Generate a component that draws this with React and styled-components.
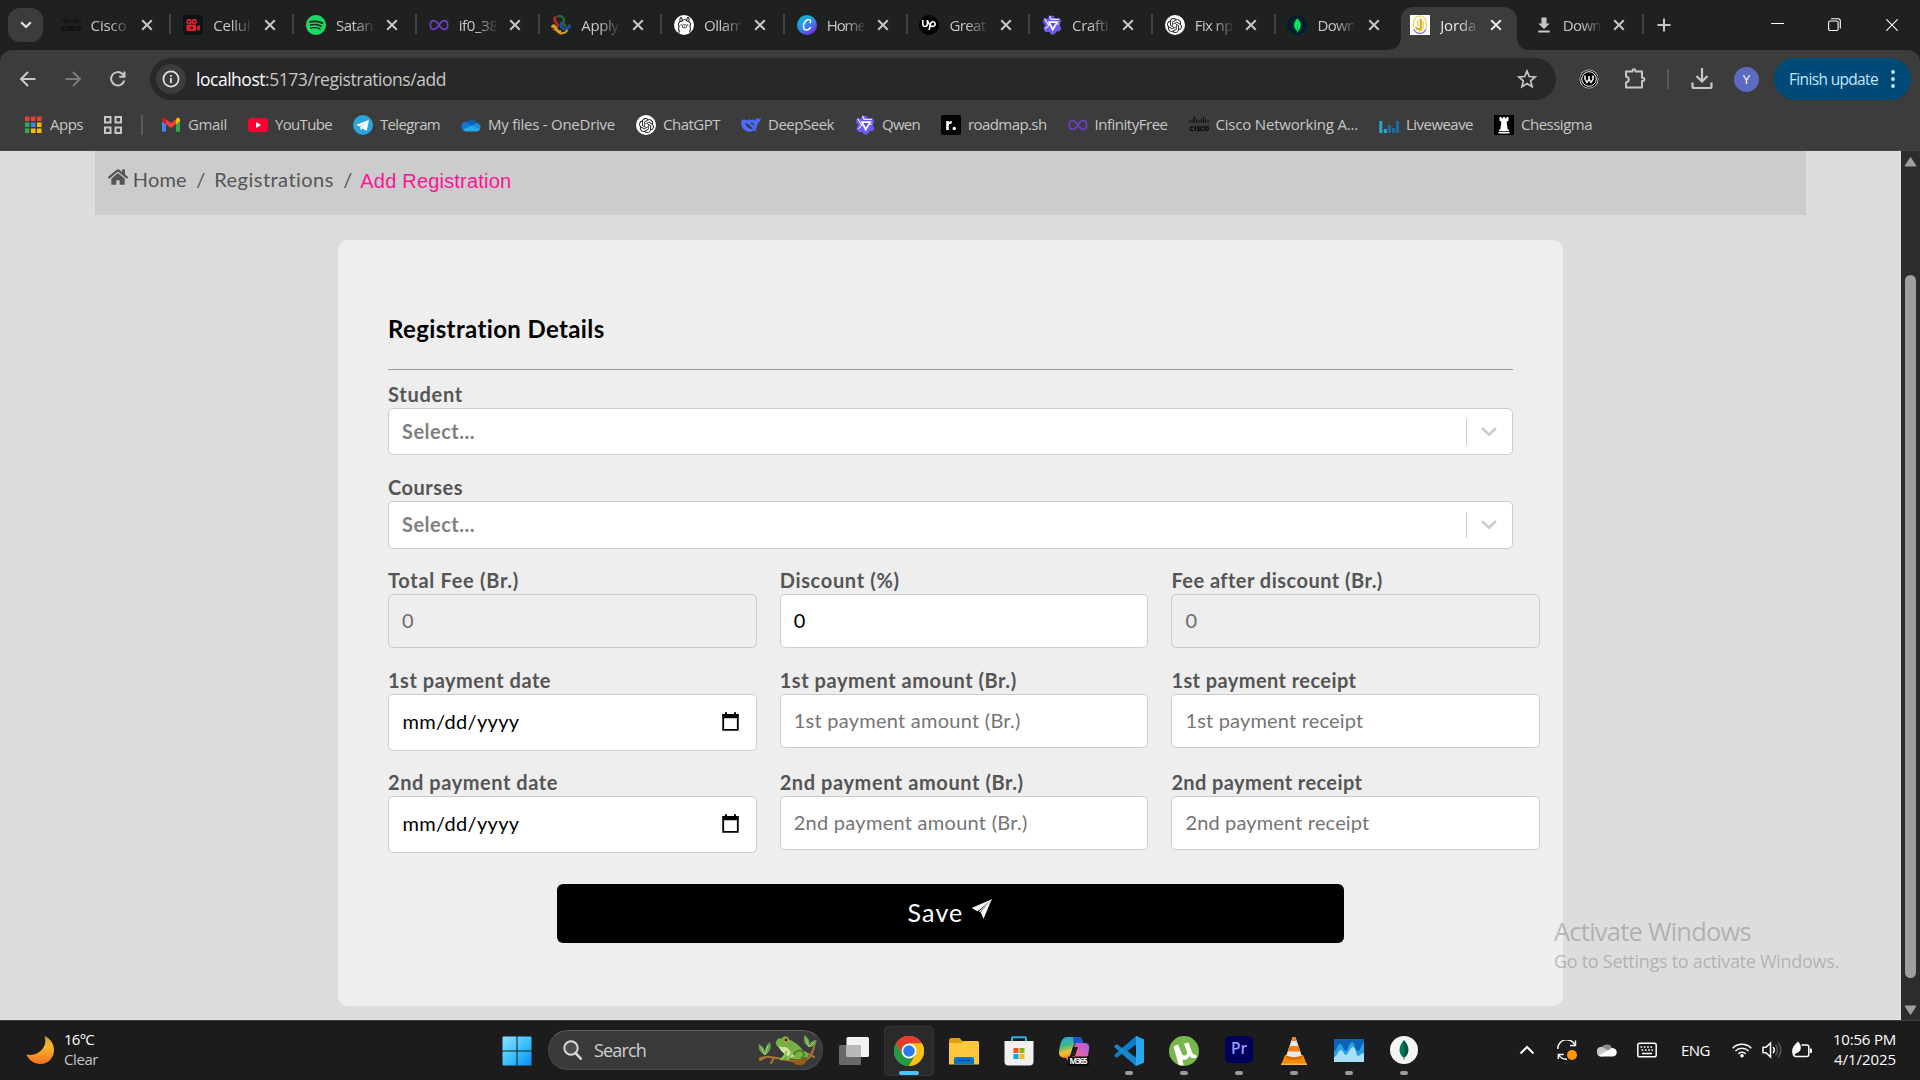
import React, { useLayoutEffect, useRef, useState } from "react";
import styled, { createGlobalStyle, css } from "styled-components";
import { FaHome } from "react-icons/fa";
import { SiSpotify, SiOllama, SiUpwork, SiOpenai, SiMongodb } from "react-icons/si";

const UI = `"Open Sans", "Noto Sans", sans-serif`;
const PAGE = `Lato, "Open Sans", sans-serif`;

const Global = createGlobalStyle`
  *, *::before, *::after { box-sizing: border-box; }
  html, body { margin: 0; padding: 0; overflow: hidden; background: #1c1c1c; }
  svg { display: block; flex: none; }
`;

/* ---------- text that keeps a given run length ---------- */

const Run = styled.span`
  display: inline-block;
  white-space: pre;
  flex: none;
`;

function Fit({ w, children }) {
  const ref = useRef(null);
  const [spacing, setSpacing] = useState(0);
  useLayoutEffect(() => {
    const natural = ref.current.getBoundingClientRect().width;
    setSpacing((w - natural) / String(children).length);
  }, [w, children]);
  return (
    <Run ref={ref} style={{ letterSpacing: `${spacing}px` }}>
      {children}
    </Run>
  );
}

/* ---------- window ---------- */

const Screen = styled.div`
  width: 1920px;
  height: 1080px;
  display: flex;
  flex-direction: column;
  position: relative;
  overflow: hidden;
  font-family: ${UI};
  background: #1f2120;
`;

/* ---------- tab strip ---------- */

const TabStrip = styled.div`
  height: 50px;
  flex: none;
  display: flex;
  align-items: center;
  background: #1f2120;
`;

const TabSearch = styled.div`
  width: 35px;
  height: 34px;
  margin: 0 4.8px 0 8px;
  border-radius: 12px;
  background: #3c3c3c;
  display: flex;
  align-items: center;
  justify-content: center;
`;

const TabBox = styled.div`
  width: 122.7px;
  height: 50px;
  flex: none;
  display: flex;
  align-items: center;
  padding-left: 12.8px;
  position: relative;
  isolation: isolate;
  color: ${(p) => (p.$active ? "#e8e8e8" : "#c7c7c7")};
  ${(p) =>
    p.$sep &&
    css`
      &::after {
        content: "";
        position: absolute;
        right: -1px;
        top: 14px;
        width: 2px;
        height: 20px;
        background: #444;
      }
    `}
`;

const ActiveShape = styled.svg`
  position: absolute;
  left: -11px;
  top: 7px;
  z-index: -1;
`;

const TabTitle = styled.div`
  width: 37px;
  margin: 0 13.3px 0 10px;
  white-space: nowrap;
  font-size: 15px;
  line-height: 22px;
  -webkit-mask-image: linear-gradient(90deg, #000 50%, rgba(0, 0, 0, 0.15) 100%);
  mask-image: linear-gradient(90deg, #000 50%, rgba(0, 0, 0, 0.15) 100%);
`;

const NewTab = styled.div`
  margin-left: 14px;
  flex: 1;
`;

const WindowButtons = styled.div`
  display: flex;
  align-items: center;
  & > div {
    width: 57px;
    display: flex;
    justify-content: center;
  }
`;

const Slot = styled.div`
  width: ${(p) => p.$w || 20}px;
  height: ${(p) => p.$h || 20}px;
  flex: none;
  display: flex;
  align-items: center;
  justify-content: center;
  border-radius: ${(p) => p.$r || 0};
  background: ${(p) => p.$bg || "transparent"};
  color: ${(p) => p.$c || "inherit"};
  overflow: hidden;
`;

const Cross = ({ s = 12, sw = 2, c = "currentColor" }) => (
  <svg width={s} height={s} viewBox="0 0 12 12">
    <path d="M1.2 1.2 10.8 10.8M10.8 1.2 1.2 10.8" stroke={c} strokeWidth={sw} fill="none" />
  </svg>
);

/* ---------- favicons ---------- */

const CiscoIcon = () => (
  <svg width="20" height="20" viewBox="0 0 20 20" fill="none" stroke="#0e0e0e">
    <path
      d="M.7 5.500v2M3 4v3.500M5.300 1.500V8M7.600 4v3.500M10 5.500v2M12.300 4v3.500M14.600 1.500V8M16.900 4v3.500M19.300 5.500v2"
      strokeWidth="1.100"
    />
    <path
      d="M4.600 11.800H3.200a1.700 1.700 0 0 0 0 3.700h1.400M6.300 11v4.900M10.700 11.700H9.300c-1.200 0-1.200 1.800 0 1.900 1.400.1 1.400 2 0 2H7.900M14.700 11.800h-1.200a1.700 1.700 0 0 0 0 3.700h1.200"
      strokeWidth="1.400"
    />
    <circle cx="17.500" cy="13.600" r="1.800" strokeWidth="1.400" />
  </svg>
);
const CameraIcon = () => (
  <Slot $bg="#0c1218" $r="3px">
    <svg width="20" height="20" viewBox="0 0 20 20">
      <g fill="#e0222b">
        <circle cx="6" cy="6.5" r="2.7" />
        <circle cx="11.2" cy="6.5" r="2.7" />
        <rect x="3.5" y="9.6" width="9.5" height="6.4" rx="1" />
        <path d="M13.6 12 16.8 9.8v6.2l-3.2-2z" />
      </g>
      <g fill="#0c1218">
        <circle cx="6" cy="6.5" r="1" />
        <circle cx="11.2" cy="6.5" r="1" />
        <rect x="7.5" y="11.8" width="2.5" height="2" />
      </g>
    </svg>
  </Slot>
);
const SpotifyIcon = () => (
  <Slot $c="#1ed760">
    <SiSpotify size={20} />
  </Slot>
);
const InfinityIcon = () => (
  <svg width="20" height="20" viewBox="0 0 20 20">
    <path
      d="M10 10C8 7 6.800 5.600 4.900 5.600 2.700 5.600 1.300 7.500 1.300 10s1.400 4.400 3.600 4.400C6.800 14.400 8 13 10 10s3.200-4.400 5.100-4.400c2.200 0 3.600 1.900 3.600 4.400s-1.400 4.400-3.600 4.400C13.200 14.400 12 13 10 10z"
      fill="none"
      stroke="#6f3dc4"
      strokeWidth="1.800"
    />
  </svg>
);
const ApplyIcon = () => (
  <svg width="20" height="20" viewBox="0 0 20 20" fill="none" strokeLinecap="round">
    <path d="M7 1.500C10 0 14 3 12.500 6.500 11.500 9 13 10 14.500 11" stroke="#1d6b3a" strokeWidth="2.600" />
    <path d="M4 2.500C1.500 6 7.500 7.500 6.500 11 5.800 13.200 4 14 3 14.500" stroke="#b3261e" strokeWidth="3" />
    <path d="M1.500 11.500C3 10 3.500 11 4.500 13s3 4.500 4.500 3.500" stroke="#dba21b" strokeWidth="2.800" />
    <path d="M10.500 8c-2 4 1.500 6 3.500 6s4-1 4.500-3" stroke="#234d9a" strokeWidth="3" />
    <path d="M9 18.500c3 0 6-1 7-3" stroke="#dba21b" strokeWidth="1.800" />
  </svg>
);
const OllamaIcon = () => (
  <Slot $bg="#fff" $r="50%" $c="#111">
    <SiOllama size={17} />
  </Slot>
);
const CanvaIcon = () => (
  <svg width="20" height="20" viewBox="0 0 20 20">
    <defs>
      <linearGradient id="cv" x1="0" y1="0" x2=".7" y2="1">
        <stop offset="0" stopColor="#00c4cc" />
        <stop offset=".55" stopColor="#2d8bea" />
        <stop offset="1" stopColor="#7d2ae8" />
      </linearGradient>
    </defs>
    <circle cx="10" cy="10" r="10" fill="url(#cv)" />
    <path d="M13.200 7.600c.9-1.200.5-3-1.300-3-2.900 0-5.400 3.400-5.400 6.600 0 2.200 1.200 3.900 3.100 3.900 1.600 0 2.900-1 3.900-2.600" fill="none" stroke="#fff" strokeWidth="1.500" strokeLinecap="round" />
  </svg>
);
const UpworkIcon = () => (
  <Slot $bg="#000" $r="50%" $c="#fff">
    <SiUpwork size={14} />
  </Slot>
);
const QwenIcon = () => (
  <svg width="20" height="20" viewBox="0 0 20 20">
    <path d="M7.500.8h4l1.300 2.500h5l1.600 3-2 3.200 2 3.700-1.800 3h-2.800l-2.600 3.200H9L7.600 17H3.200L1.300 13.500l1.800-3L.6 6.300l1.900-2.800h3.400z" fill="#6a5cf0" />
    <path d="M5.600 6.300h11l-2.800 4.500-3.400 5.200z" fill="#fff" />
    <path d="M8.400 8h5.200l-2.800 4.600z" fill="#5a48e6" />
    <path d="M7.500.8 9 4.300H17M2.500 3.500l4.300 7-3.600 3.400M10.400 16l4-7h3" fill="none" stroke="#e6e2ff" strokeWidth="1.200" />
  </svg>
);
const GptIcon = () => (
  <Slot $bg="#fff" $r="50%" $c="#222">
    <SiOpenai size={15} />
  </Slot>
);
const MongoIcon = () => (
  <Slot $bg="#001e2b" $r="50%" $c="#00ed64">
    <SiMongodb size={15} />
  </Slot>
);
const JordanIcon = () => (
  <Slot $bg="#fff">
    <svg width="20" height="20" viewBox="0 0 20 20" fill="none">
      <path d="M4 13C2 7 5 1 10 1s7.500 6 6 12" stroke="#f1d24a" strokeWidth="1.200" />
      <path d="M4 14c2 6 9.500 6 12 0" stroke="#8c7cc0" strokeWidth="1.300" />
      <path d="M10.800 3.500v8.500c0 3-4.600 3-4.600 0" stroke="#d6ac1a" strokeWidth="2" />
      <path d="M8 5v6M13 6v6c0 3-2 4-5 4" stroke="#e2bf3a" strokeWidth="1.100" />
    </svg>
  </Slot>
);
const DownloadTabIcon = () => (
  <svg width="20" height="20" viewBox="0 0 20 20">
    <path d="M8.500 2.500h5v6h3.200L11 14 5.300 8.500h3.200zM5.300 15.500h11.400v2H5.300z" fill="#c7c7c7" />
  </svg>
);

const TABS = [
  [CiscoIcon, "Cisco", 36],
  [CameraIcon, "Cellul", 37],
  [SpotifyIcon, "Satan", 37],
  [InfinityIcon, "if0_38", 39],
  [ApplyIcon, "Apply", 37],
  [OllamaIcon, "Ollam", 39],
  [CanvaIcon, "Home", 38],
  [UpworkIcon, "Great", 36],
  [QwenIcon, "Crafti", 36],
  [GptIcon, "Fix np", 38],
  [MongoIcon, "Down", 38],
  [JordanIcon, "Jorda", 36],
  [DownloadTabIcon, "Down", 38],
];

/* ---------- toolbar ---------- */

const Chrome = styled.div`
  height: 101px;
  flex: none;
  background: #3c3c3c;
  border-radius: 12px 12px 0 0;
  border-bottom: 1px solid #4a4646;
`;

const ToolRow = styled.div`
  height: 58px;
  display: flex;
  align-items: center;
  color: #c7c7c7;
`;

const NavButtons = styled.div`
  width: 150px;
  display: flex;
  align-items: center;
  padding-left: 18px;
  gap: 25px;
`;

const Omnibox = styled.div`
  width: 1406px;
  height: 42px;
  border-radius: 21px;
  background: #282828;
  display: flex;
  align-items: center;
  padding: 0 19px 0 6px;
  font-size: 17.5px;
  color: #c7c7c7;
`;

const Host = styled.span`
  color: #fff;
  margin-left: 10px;
`;

const Spacer = styled.div`
  flex: 1;
`;

const ToolIcons = styled.div`
  display: flex;
  align-items: center;
  flex: 1;
  padding-left: 23px;
`;

const Puzzle = styled.svg`
  margin-left: 24px;
`;

const Divider = styled.div`
  width: 2px;
  height: 20px;
  background: #5b5b5b;
  margin: ${(p) => p.$m || "0"};
`;

const Avatar = styled.div`
  width: 25px;
  height: 25px;
  border-radius: 50%;
  background: #5c6bc0;
  color: #fff;
  font-size: 13px;
  display: flex;
  align-items: center;
  justify-content: center;
  margin-left: 21px;
`;

const UpdatePill = styled.div`
  margin-left: 15px;
  width: 137px;
  height: 42px;
  border-radius: 21px;
  background: #004a77;
  color: #c2e7ff;
  font-size: 15.5px;
  display: flex;
  align-items: center;
  padding: 0 0 1px 15px;
  gap: 13px;
`;

const Bookmarks = styled.div`
  height: 34px;
  display: flex;
  align-items: center;
  padding-left: 23px;
  color: #c7c7c7;
  font-size: 15px;
`;

const Bookmark = styled.div`
  display: flex;
  align-items: center;
  gap: 7px;
  margin-right: 20px;
`;

const BookmarkName = styled.span`
  padding-bottom: 2px;
  margin-right: 1px;
`;

const AppsIcon = () => (
  <svg width="20" height="20" viewBox="0 0 20 20">
    {["#ea4335", "#ea4335", "#ea4335", "#34a853", "#4285f4", "#fbbc04", "#34a853", "#fbbc04", "#fbbc04"].map((c, i) => (
      <rect key={i} x={2 + (i % 3) * 6} y={1.500 + Math.floor(i / 3) * 6} width="4.500" height="4.500" fill={c} />
    ))}
  </svg>
);
const GroupsIcon = () => (
  <svg width="18" height="18" viewBox="0 0 18 18" fill="none" stroke="#c7c7c7" strokeWidth="2">
    <path d="M1 1h5.500v5.500H1zM11.500 1H17v5.500h-5.500zM1 11.500h5.500V17H1zM11.500 11.500H17V17h-5.500z" />
  </svg>
);
const GmailIcon = () => (
  <svg width="20" height="20" viewBox="0 0 20 20">
    <path d="M1 6v9.500c0 .8.600 1.300 1.300 1.300H5V9z" fill="#4285f4" />
    <path d="M19 6v9.500c0 .8-.6 1.300-1.300 1.300H15V9z" fill="#34a853" />
    <path d="M15 4.600V9.200l4-3V4.800c0-1.700-1.900-2.500-3.200-1.500z" fill="#fbbc04" />
    <path d="M1 4.800v1.500l4 3V4.600l-.8-1.300C2.900 2.300 1 3.100 1 4.800z" fill="#c5221f" />
    <path d="M5 9.200V4.200l5 3.800 5-3.800v5L10 13z" fill="#ea4335" />
  </svg>
);
const YouTubeIcon = () => (
  <svg width="20" height="20" viewBox="0 0 20 20">
    <rect y="3" width="20" height="14" rx="3.500" fill="#ff0033" />
    <path d="M8 7v6l5-3z" fill="#fff" />
  </svg>
);
const TelegramIcon = () => (
  <svg width="20" height="20" viewBox="0 0 20 20">
    <circle cx="10" cy="10" r="10" fill="#2ba3df" />
    <path d="M3.500 9.700 15 5.200c.6-.2 1 .1.800.9l-1.900 9c-.1.600-.6.800-1.100.5l-3-2.200-1.500 1.400c-.3.300-.6.300-.7-.2l-.9-3.300-3-1c-.6-.2-.6-.5-.2-.6z" fill="#fff" />
    <path d="m7 11.200 6.300-4-5 4.700-.2 2z" fill="#b8d9ec" />
  </svg>
);
const OneDriveIcon = () => (
  <svg width="20" height="20" viewBox="0 0 20 20">
    <path d="M6 7.500A5.300 5.300 0 0 1 15.600 8L10 12 4.500 8z" fill="#0a5fb4" />
    <path d="M1.800 14.500A4.300 4.300 0 0 1 7.200 7.800L12 12l-6 4.500z" fill="#1177d1" />
    <path d="M10 11 15.500 8a4.200 4.200 0 0 1 3.600 6L14 16z" fill="#1490df" />
    <path d="M1.800 14.500 10.500 10.400 19 14.200c-.6 1.500-1.800 2.300-3.300 2.300H5c-1.500 0-2.500-.8-3.200-2z" fill="#28a8ea" />
  </svg>
);
const DeepSeekIcon = () => (
  <svg width="20" height="20" viewBox="0 0 20 20">
    <path
      d="M12 4.200c1.500.2 1.200 1.500 2.500 1.600.6-1 .1-1.800 1-3.300.3 1.300 1.200 1.200 2.200 1.300.9 0 1.300-.6 2.100-.6-.2 2.500-1.300 4-3 4.600-.2 2.800-1 4.800-2.600 6.700.8.500 1.600.9 2.300 1-.7.900-2.500.8-4 .1-3.800 2.600-9.200 1-11.300-3.300C-.2 9 .1 5.800 1.500 4.700 3 3.900 4.400 4.900 6 5.200c1.300-.7 2.800-.8 3.900-.2 1 .500 1.300-.9 2.100-.8z"
      fill="#4d6bfe"
    />
    <path d="M4 8.300c2.300-.4 4.300 1.400 5.600 3 .7 1 1.300 1.700 2.300 2.400-3.500 1-6.300-1.400-7.900-5.400z" fill="#3c3c3c" />
    <path d="M9.600 8.300c1.800-.5 3.200.6 3.200 2.600" fill="none" stroke="#3c3c3c" strokeWidth="1.200" />
  </svg>
);
const RoadmapIcon = () => (
  <Slot $bg="#000" $r="2px" $c="#fff">
    <svg width="20" height="20" viewBox="0 0 20 20">
      <path d="M5.200 15V6h2.600v1.500C8.500 6.300 9.400 5.800 10.700 5.900v2.600c-1.900-.1-2.900.6-2.900 2.500v4z" fill="#fff" />
      <circle cx="13.300" cy="13.500" r="1.700" fill="#fff" />
    </svg>
  </Slot>
);
const LiveweaveIcon = () => (
  <svg width="20" height="20" viewBox="0 0 20 20">
    <path d="M.3 6h3v12h-3zM4.800 14h3v4h-3z" fill="#26a9cb" />
    <path d="M8.800 10h3v8h-3zM13 13h3v5h-3zM17 6h3v12h-3z" fill="#1b6fa3" />
  </svg>
);
const RookIcon = () => (
  <Slot $bg="#000">
    <svg width="20" height="20" viewBox="0 0 20 20">
      <path d="M5.500 2h2v1.300h1.500V2h2v1.300h1.500V2h2v3.500l-1.800 1.300.8 7 1.500 1.200v1.200H5v-1.200l1.500-1.200.8-7-1.800-1.300zM4.500 17h11v1.500h-11z" fill="#fff" />
    </svg>
  </Slot>
);

const BOOKMARKS = [
  [GmailIcon, "Gmail", 39],
  [YouTubeIcon, "YouTube", 57],
  [TelegramIcon, "Telegram", 60],
  [OneDriveIcon, "My files - OneDrive", 127],
  [GptIcon, "ChatGPT", 57],
  [DeepSeekIcon, "DeepSeek", 66],
  [QwenIcon, "Qwen", 38],
  [RoadmapIcon, "roadmap.sh", 78.5],
  [InfinityIcon, "InfinityFree", 73],
  [CiscoIcon, "Cisco Networking A...", 142.500, 2],
  [LiveweaveIcon, "Liveweave", 67],
  [RookIcon, "Chessigma", 71],
];

/* ---------- page ---------- */

const Viewport = styled.div`
  height: 869px;
  flex: none;
  display: flex;
`;

const Page = styled.main`
  width: 1901px;
  background: #ddd;
  font-family: ${PAGE};
  font-size: 20px;
`;

const Breadcrumb = styled.nav`
  height: 64px;
  margin: 0 95px 25px;
  background: #ccc;
  color: #555;
  display: flex;
  align-items: flex-start;
  padding: 15px 13px;
  line-height: 26px;
`;

const HomeGlyph = styled.span`
  padding-top: 1px;
  margin-right: 4.800px;
`;

const Slash = styled.span`
  margin: 0 9px 0 9.400px;
`;

const Current = styled.span`
  font-family: "Liberation Sans", Arial, sans-serif;
  color: #ff1493;
  padding-top: 2px;
  margin-left: -1px;
`;

const Card = styled.form`
  width: 1225px;
  height: 766px;
  margin: 0 auto;
  padding: 74px 50px 0;
  border-radius: 10px;
  background: #eee;
`;

const Heading = styled.h2`
  margin: 0;
  font-size: 24px;
  font-weight: 700;
  line-height: 30px;
  color: #000;
`;

const Rule = styled.hr`
  margin: 25px 0 12px;
  border: 0;
  height: 1px;
  background: #9a9a9a;
`;

const Field = styled.div`
  width: ${(p) => p.$w || "auto"};
  flex: none;
  margin-bottom: ${(p) => p.$mb || 0}px;
`;

const Label = styled.div`
  height: 26px;
  line-height: 25px;
  font-weight: 700;
  color: #555;
`;

const Control = styled.div`
  height: ${(p) => p.$h}px;
  border: 1px solid #ccc;
  border-radius: 5px;
  background: ${(p) => (p.$disabled ? "#eee" : "#fff")};
  color: ${(p) => p.$c || "#757575"};
  font-weight: ${(p) => p.$weight || 400};
  display: flex;
  align-items: center;
  padding: 0 13px ${(p) => (p.$date ? 3 : 2)}px;
  padding-left: ${(p) => (p.$date ? 13.500 : 13)}px;
`;

const SelectEnd = styled.div`
  height: 26px;
  width: 33px;
  margin: 2px 0 0 auto;
  border-left: 1px solid #ccc;
  display: flex;
  align-items: center;
  justify-content: center;
  padding-left: 12px;
`;

const Columns = styled.div`
  display: flex;
  gap: 23px;
  align-items: flex-start;
  margin-bottom: ${(p) => p.$mb}px;
`;

const DateIcon = styled.svg`
  margin: 1.500px 4px 0 auto;
`;

const SaveButton = styled.div`
  width: 787px;
  height: 59px;
  margin: 0 auto;
  border-radius: 6px;
  background: #000;
  color: #fff;
  font-size: 25px;
  display: flex;
  align-items: center;
  justify-content: center;
  gap: 8px;
  padding: 0 2px 3px 0;
`;

const PlaneIcon = styled.svg`
  margin-bottom: 6px;
`;

const Scrollbar = styled.div`
  width: 19px;
  background: #2c2c2c;
  display: flex;
  flex-direction: column;
  align-items: center;
  padding: 5px 0 4px;
`;

const Thumb = styled.div`
  width: 11px;
  height: 703px;
  margin: 108px 0 auto;
  border-radius: 6px;
  background: #9f9f9f;
`;

const Watermark = styled.div`
  position: absolute;
  left: 1554px;
  top: 913.500px;
  color: rgba(125, 125, 125, 0.48);
  line-height: 34px;
`;
const MarkTitle = styled.div`
  font-size: 25.5px;
`;
const MarkText = styled.div`
  font-size: 18px;
  line-height: 26px;
`;

function Select({ label, w, h, mb }) {
  return (
    <Field $mb={mb}>
      <Label>
        <Fit w={w}>{label}</Fit>
      </Label>
      <Control $h={h} $c="#808080" $weight={700}>
        <Fit w={73}>Select...</Fit>
        <SelectEnd>
          <svg width="16" height="10" viewBox="0 0 16 10">
            <path d="M1.800 1.800 8 7.800l6.200-6" fill="none" stroke="#ccc" strokeWidth="2.600" strokeLinecap="round" />
          </svg>
        </SelectEnd>
      </Control>
    </Field>
  );
}

function Input({ label, lw, text, tw, date, disabled, color }) {
  return (
    <Field $w="368.7px">
      <Label>
        <Fit w={lw}>{label}</Fit>
      </Label>
      <Control $h={date ? 57 : 54} $date={date} $disabled={disabled} $c={color}>
        <Fit w={tw}>{text}</Fit>
        {date && (
          <DateIcon width="17" height="19" viewBox="0 0 17 19">
            <path d="M1.200 3h14.600v14.800H1.200z" fill="none" stroke="#000" strokeWidth="1.800" />
            <path d="M.5 2.300h16v4H.5zM3 .3h2v3H3zM12 .3h2v3h-2z" fill="#000" />
          </DateIcon>
        )}
      </Control>
    </Field>
  );
}

/* ---------- taskbar ---------- */

const Taskbar = styled.div`
  height: 60px;
  flex: none;
  background: #1c1c1c;
  border-top: 1px solid #3e3e3e;
  display: flex;
  align-items: center;
  color: #fff;
  font-size: 15px;
`;

const Weather = styled.div`
  width: 492px;
  display: flex;
  align-items: center;
  gap: 10px;
  padding-left: 26px;
  line-height: 20px;
`;
const Readings = styled.div`
  padding-bottom: 4px;
`;
const Dim = styled.div`
  color: #c4c4c4;
`;

const TaskSlot = styled.div`
  width: 50px;
  height: 50px;
  margin-right: ${(p) => p.$mr ?? 5}px;
  flex: none;
  border-radius: 5px;
  display: flex;
  align-items: center;
  justify-content: center;
  position: relative;
  background: ${(p) => (p.$active ? "#2a2a2a" : "transparent")};
  box-shadow: ${(p) => (p.$active ? "inset 0 0 0 1px #343434" : "none")};
  &::after {
    content: "";
    display: ${(p) => (p.$running || p.$active ? "block" : "none")};
    position: absolute;
    bottom: 1px;
    width: ${(p) => (p.$active ? 20 : 8)}px;
    height: 4px;
    border-radius: 2px;
    background: ${(p) => (p.$active ? "#4cc2ff" : "#9b9b9b")};
  }
`;

const SearchPill = styled.div`
  width: 275px;
  height: 40px;
  margin: 0 6px 1px 0;
  border-radius: 20px;
  border: 1px solid #4a4a4a;
  border-top-color: #5f5f5f;
  background: #3a3a3a;
  display: flex;
  align-items: center;
  padding: 0 5px 0 14px;
  font-size: 18px;
  color: #d0d0d0;
`;
const SearchText = styled.span`
  margin-left: 12px;
  flex: 1;
`;

const Tray = styled.div`
  flex: 1;
  display: flex;
  align-items: center;
  justify-content: flex-end;
  padding: 0 24px 2px 0;
`;
const TrayItem = styled.div`
  width: ${(p) => p.$w}px;
  margin-right: ${(p) => p.$mr}px;
`;
const Clock = styled.div`
  text-align: right;
  line-height: 20px;
  padding-bottom: 2px;
`;

const MoonIcon = () => (
  <svg width="28" height="30" viewBox="0 0 28 30">
    <defs>
      <linearGradient id="moon" x1="0" y1="0" x2="0" y2="1">
        <stop offset="0" stopColor="#d9a03c" />
        <stop offset=".4" stopColor="#f5b52e" />
        <stop offset="1" stopColor="#f3701e" />
      </linearGradient>
    </defs>
    <path d="M18.500 0C25 3 28 8 28 14.500 28 22 22 28 14.500 28 8 28 2.500 24 .5 18.500 6 20 12.500 18 16.500 13 19.500 9 20.200 4.500 18.500 0z" fill="url(#moon)" />
  </svg>
);
const StartIcon = () => (
  <svg width="30" height="30" viewBox="0 0 30 30">
    <defs>
      <linearGradient id="st" x1="0" y1="0" x2="1" y2="1">
        <stop offset="0" stopColor="#8fe0ff" />
        <stop offset=".5" stopColor="#3ec3fd" />
        <stop offset="1" stopColor="#0a8cf5" />
      </linearGradient>
    </defs>
    <path d="M1.500.5h13v14H.5v-13q0-1 1-1zM15.500.5h13q1 0 1 1v13h-14zM.5 15.500h14v14h-13q-1 0-1-1zM15.500 15.500h14v13q0 1-1 1h-13z" fill="url(#st)" />
  </svg>
);
const LensIcon = () => (
  <svg width="19" height="20" viewBox="0 0 19 20" fill="none" stroke="#d8d8d8" strokeWidth="2">
    <circle cx="8" cy="8" r="6.700" fill="#4c4c4c" />
    <path d="m12.700 13.200 5 5.500" strokeWidth="2.500" strokeLinecap="round" />
  </svg>
);
const FrogIcon = () => (
  <svg width="59" height="32" viewBox="0 0 59 32">
    <path d="M2 24.500C12 21 17 24 26 25.500s18 4 25-2c3-3 4.500-8 5.500-13M8 23l-6 3M16 24l-3 5M50 20l6 3" fill="none" stroke="#a8772c" strokeWidth="2" strokeLinecap="round" />
    <path d="M35 27c4-3 9-3 14-2-1 4-3 6-7 6s-6-1-7-4z" fill="#9a5c14" />
    <path d="M7 21C1 18 0 14 1 10c4 2 7 6 6 11zM7.500 21C6 15 8 11 12 8c2 5 0 10-4.500 13zM51 13c-5-2-6-7-4.500-12C51 4 53 8 51 13zM51.500 13c0-5 3-7 7-7 0 5-3 7-7 7z" fill="#67a04c" />
    <path d="M2.500 13 7 21l3-9M48 5l3 8 5-5" stroke="#bfdc8a" fill="none" strokeWidth=".8" />
    <path d="M18 8c1-3 3-4.500 6-3.500 2-3.500 6-2.500 7 1 5 2 12 6.500 14 11.500 4 0 6 3 5 6l-8 2c-4 1-9 0-12-1l-5 2-1-2 3-4c-2-2-5-5-6-7-2-1-4-3-3-5z" fill="#76b043" />
    <path d="M19 11.500c3 2 8 1 10 2 3 2 4 7 8 9-4 1-8 0-9-2-3-1-6-5-7-7z" fill="#d3e3a0" />
    <path d="M36 21c1-4 5-6 9-3 2 2 1 5-2 6" fill="none" stroke="#3d7523" strokeWidth="1.500" />
    <path d="M28 17c1 4-3 6-5 9M33 19c0 4-3 5-4 7" fill="none" stroke="#8fc354" strokeWidth="2.300" />
    <circle cx="28" cy="6" r="2.400" fill="#d5a63c" />
    <circle cx="28" cy="6" r="1.400" fill="#1c2412" />
  </svg>
);
const TaskViewIcon = () => (
  <svg width="30" height="30" viewBox="0 0 30 30">
    <rect y="9" width="22" height="20" rx="1.500" fill="#686868" />
    <rect x="7.500" y="1" width="22.500" height="20" rx="1.500" fill="#f2f2f2" />
    <rect x="7.500" y="9" width="14.500" height="12" fill="#b9b9b9" />
  </svg>
);
const ChromeIcon = () => (
  <svg width="30" height="30" viewBox="0 0 30 30">
    <circle cx="15" cy="15" r="15" fill="#fbc116" />
    <path d="M2 7.500A15 15 0 0 1 28 7.500H15L8.500 18.800z" fill="#e33b2e" />
    <path d="M2 7.500 8.500 18.700 15 22.500 15 30A15 15 0 0 1 2 7.500z" fill="#229a47" />
    <path d="M8.500 18.700 15 22.500 21.500 18.700 15 30z" fill="#229a47" />
    <path d="M28 7.500H15l6.500 11.200L15 30A15 15 0 0 0 28 7.500z" fill="#fbc116" />
    <circle cx="15" cy="15" r="7.400" fill="#fff" />
    <circle cx="15" cy="15" r="5.800" fill="#2a7af0" />
  </svg>
);
const FolderIcon = () => (
  <svg width="30" height="30" viewBox="0 0 30 30">
    <path d="M0 4.500Q0 2 2 2h8.500L14 5.500V9H0z" fill="#e09e0c" />
    <path d="M0 7h12l2-2h14.500Q30 5 30 6.500V28.500H0z" fill="#fdc83b" />
    <path d="M5 28.500v-5.500q0-2 2-2h16q2 0 2 2v5.500z" fill="#0f72c9" />
    <path d="M9 24.300h12" stroke="#0a4e93" strokeWidth="1.200" />
  </svg>
);
const StoreIcon = () => (
  <svg width="30" height="30" viewBox="0 0 30 30">
    <path d="M8 6V2q0-.8.8-.8h12.400q.8 0 .8.800v4" fill="none" stroke="#2fb1e8" strokeWidth="2" />
    <path d="M.5 5h29v20.500q0 4-4 4h-21q-4 0-4-4z" fill="#f0f0f0" />
    <path d="M9.500 12h5v5h-5z" fill="#f25022" />
    <path d="M15.500 12h5v5h-5z" fill="#7fba00" />
    <path d="M9.500 18h5v5h-5z" fill="#00a4ef" />
    <path d="M15.500 18h5v5h-5z" fill="#ffb900" />
  </svg>
);
const M365Icon = () => (
  <svg width="32" height="30" viewBox="0 0 32 30">
    <defs>
      <linearGradient id="ma" x1="0" y1="0" x2=".3" y2="1">
        <stop offset="0" stopColor="#23a7e8" />
        <stop offset=".4" stopColor="#39b98c" />
        <stop offset=".7" stopColor="#f2c42c" />
        <stop offset="1" stopColor="#f2602b" />
      </linearGradient>
      <linearGradient id="mb" x1="1" y1="0" x2="0" y2="1">
        <stop offset="0" stopColor="#a25cf0" />
        <stop offset=".5" stopColor="#e763a8" />
        <stop offset="1" stopColor="#f5733a" />
      </linearGradient>
    </defs>
    <path d="M9 1h12q3 0 4 6h-6q-3 0-4 4l-3 10Q10 27 8 22 1 22 1 17 2 1 9 1z" fill="url(#ma)" />
    <path d="M15 1h6q3 0 4 6h-6q-2 0-3 2z" fill="#1c55cf" />
    <path d="M18 7h9q5 0 4 6-1 11-6 14H9q4-1 5-7l2-9q1-3 2-4z" fill="url(#mb)" />
    <path d="M15 11h5l-3 9h-5z" fill="#1c1c1c" />
    <rect x="10" y="20.500" width="21" height="9.500" rx="1" fill="#0a0a0a" />
    <text x="20.500" y="28.200" fontFamily="Open Sans, sans-serif" fontWeight="700" fontSize="8" fill="#fff" textAnchor="middle" textLength="18">
      M365
    </text>
  </svg>
);
const CodeIcon = () => (
  <svg width="30" height="30" viewBox="0 0 30 30">
    <path d="M22 0 30 3.500v23L22 30 8.500 17.500 3 21.700.5 20.500v-2L22 0z" fill="#0f7dc7" />
    <path d="M.5 11.500v-2L3 8.300 22 22.500V30L.5 11.500z" fill="#1787d2" />
    <path d="M22 0 30 3.500v23L22 30z" fill="#29a8f2" />
    <path d="M22 8.500v13L13.500 15z" fill="#1c1c1c" />
    <path d="M.5 11.500 4.300 15 .5 18.500z" fill="#1c1c1c" />
  </svg>
);
const UtIcon = () => (
  <svg width="30" height="30" viewBox="0 0 30 30">
    <circle cx="15" cy="15" r="15" fill="#78b74a" />
    <path d="M4.500 10.500 9 8.500l4 9.500c1.500 3 6 1.500 5-2L15 7.500l4.500-1L23 16c1 2.500 2 3 4 2.500l1 2.500c-3 2-6 1.500-7.500-1-1.500 3.500-5 4.500-7 3.500l1 5.500c-2 1-4 .5-5-.5z" fill="#fff" />
  </svg>
);
const PrBadge = styled.div`
  width: 28px;
  height: 27px;
  margin-bottom: 3px;
  border-radius: 5px;
  background: #00005b;
  color: #9999ff;
  font-size: 15.5px;
  font-weight: 600;
  line-height: 24px;
  text-align: center;
`;
const VlcIcon = () => (
  <svg width="26" height="30" viewBox="0 0 26 30">
    <path d="M4 19h18l4 10H0z" fill="#f48b00" />
    <path d="M0 27.500h26V29H0z" fill="#ffb54a" />
    <path d="M11.600 1h2.800l7 20.500q-8.400 4-16.800 0z" fill="#e9e9e9" />
    <path d="M11.600 1h2.800l1.200 4h-5.200zM8.600 10h8.800l1.800 5.500H6.800z" fill="#f57f17" />
    <path d="M5.500 19.500q7.500 3.500 15 0l.9 2.500q-8.400 4-16.800 0z" fill="#e06a00" />
  </svg>
);
const MonitorIcon = () => (
  <svg width="30" height="24" viewBox="0 0 30 24">
    <path d="M0 0h30v23H0z" fill="#0c63b8" />
    <path d="M0 12c3 0 3-7 6-7s4 7 6 7 3-9 6-9 3 9 6 9 3-8 6-8v19H0z" fill="#2b9fe0" />
    <path d="M0 18c3 0 4-7 7-7 2 0 3 5 5 5s4-8 7-8 3 9 5 9 3-3 6-3v9H0z" fill="#a9dff8" />
  </svg>
);
const CompassIcon = () => (
  <svg width="28" height="30" viewBox="0 0 28 30">
    <circle cx="14" cy="14" r="14" fill="#f5f5f3" />
    <path d="M14 4c3 3.500 4.500 6.500 4.500 10S16.500 20.500 14 22z" fill="#00573f" />
    <path d="M14 4c-3 3.500-4.500 6.500-4.500 10s2 6.500 4.500 8z" fill="#00795a" />
    <path d="M14 21v3" stroke="#8a8a8a" strokeWidth="1" />
  </svg>
);

const TASKS = [
  [TaskViewIcon],
  [ChromeIcon, "active"],
  [FolderIcon],
  [StoreIcon],
  [M365Icon],
  [CodeIcon, "running"],
  [UtIcon, "running"],
  [() => <PrBadge>Pr</PrBadge>, "running"],
  [VlcIcon, "running"],
  [MonitorIcon, "running"],
  [CompassIcon, "running"],
];

export default function App() {
  return (
    <Screen>
      <Global />
      <TabStrip>
        <TabSearch>
          <svg width="12" height="8" viewBox="0 0 12 8">
            <path d="m1.200 1.200 4.800 4.800 4.800-4.800" fill="none" stroke="#e3e3e3" strokeWidth="2.200" />
          </svg>
        </TabSearch>
        {TABS.map(([Icon, title, w], i) => (
          <TabBox key={i} $active={i === 11} $sep={i !== 10 && i !== 11}>
            {i === 11 && (
              <ActiveShape width="144" height="43" viewBox="0 0 144 43">
                <path d="M0 43c10 0 15-5 15-14V12C15 5 20 0 27 0h90c7 0 14 5 14 12v17c0 9 4 14 13 14z" fill="#3c3c3c" />
              </ActiveShape>
            )}
            <Icon />
            <TabTitle>
              <Fit w={w}>{title}</Fit>
            </TabTitle>
            <Cross />
          </TabBox>
        ))}
        <NewTab>
          <svg width="14" height="14" viewBox="0 0 14 14">
            <path d="M7 .5v13M.5 7h13" stroke="#c7c7c7" strokeWidth="2" />
          </svg>
        </NewTab>
        <WindowButtons>
          <div>
            <svg width="13" height="14" viewBox="0 0 13 14">
              <path d="M0 5.500h13" stroke="#fff" strokeWidth="1" />
            </svg>
          </div>
          <div>
            <svg width="14" height="14" viewBox="0 0 14 14" fill="none" stroke="#fff" strokeWidth="1.100">
              <rect x=".6" y="3" width="9.500" height="9.500" rx="1.500" />
              <path d="M3 .8h7q2.300 0 2.300 2.300v7.500" />
            </svg>
          </div>
          <div>
            <Cross s={14} sw={1} c="#fff" />
          </div>
        </WindowButtons>
      </TabStrip>

      <Chrome>
        <ToolRow>
          <NavButtons>
            <svg width="20" height="20" viewBox="0 0 20 20" fill="none" stroke="#c7c7c7" strokeWidth="2">
              <path d="M17.500 10H3M10 3l-7 7 7 7" />
            </svg>
            <svg width="20" height="20" viewBox="0 0 20 20" fill="none" stroke="#7b7b7b" strokeWidth="2">
              <path d="M2.500 10H17M10 3l7 7-7 7" />
            </svg>
            <svg width="20" height="20" viewBox="0 0 20 20" fill="none" stroke="#c7c7c7" strokeWidth="2">
              <path d="M16.300 11.500A6.700 6.700 0 1 1 14.500 5L16.500 7M16.500 2.500v5.300h-5.300" />
            </svg>
          </NavButtons>
          <Omnibox>
            <Slot $w={30} $h={30} $r="50%" $bg="#3c3c3c">
              <svg width="18" height="18" viewBox="0 0 18 18">
                <circle cx="9" cy="9" r="7.600" fill="none" stroke="#e3e3e3" strokeWidth="1.700" />
                <path d="M8.100 8h1.800v5H8.100zM8.100 5h1.800v1.800H8.100z" fill="#e3e3e3" />
              </svg>
            </Slot>
            <Host>
              <Fit w={69}>localhost</Fit>
            </Host>
            <Fit w={181}>:5173/registrations/add</Fit>
            <Spacer />
            <svg width="20" height="20" viewBox="0 0 20 20">
              <path d="m10 2 2.300 5.500 5.900.5-4.500 3.900 1.400 5.800L10 14.600l-5.100 3.100 1.400-5.800L1.800 8l5.900-.5z" fill="none" stroke="#c7c7c7" strokeWidth="1.700" />
            </svg>
          </Omnibox>
          <ToolIcons>
            <svg width="20" height="20" viewBox="0 0 20 20">
              <circle cx="10" cy="10" r="9.500" fill="#c9c9c9" />
              <circle cx="10" cy="10" r="8.700" fill="#000" />
              <circle cx="10" cy="10" r="7.300" fill="none" stroke="#fff" strokeWidth="1" />
              <path d="M6 6.500v3.800l2 3 2-3 2 3 2-3V6.500M10 7v4" fill="none" stroke="#fff" strokeWidth="1.500" />
            </svg>
            <Puzzle width="24" height="24" viewBox="0 0 24 24">
              <path d="M3 4.500h6.500V3.800a1.500 1.500 0 0 1 3 0v.7H19v6.300h.8a1.500 1.500 0 0 1 0 3.100H19v6.600H3v-5c3.700-.8 3.700-5.200 0-6z" fill="none" stroke="#c7c7c7" strokeWidth="2" strokeLinejoin="round" />
            </Puzzle>
            <Divider $m="0 22px 0 20px" />
            <svg width="22" height="22" viewBox="0 0 22 22" fill="none" stroke="#c7c7c7" strokeWidth="2.200">
              <path d="M11 0v13M5.500 8l5.500 5.500L16.500 8M1.500 14.500v4q0 1.500 1.500 1.500h16q1.500 0 1.500-1.500v-4" />
            </svg>
            <Avatar>Y</Avatar>
            <UpdatePill>
              <Fit w={89}>Finish update</Fit>
              <svg width="4" height="20" viewBox="0 0 4 20" fill="#c2e7ff">
                <circle cx="2" cy="3" r="1.900" />
                <circle cx="2" cy="10" r="1.900" />
                <circle cx="2" cy="17" r="1.900" />
              </svg>
            </UpdatePill>
          </ToolIcons>
        </ToolRow>
        <Bookmarks>
          <Bookmark>
            <AppsIcon />
            <BookmarkName>
              <Fit w={33}>Apps</Fit>
            </BookmarkName>
          </Bookmark>
          <GroupsIcon />
          <Divider $m="0 18px 0 19px" />
          {BOOKMARKS.map(([Icon, text, w, extra]) => (
            <React.Fragment key={text}>
              <Bookmark>
                <Icon />
                <BookmarkName>
                  <Fit w={w}>{text}</Fit>
                </BookmarkName>
              </Bookmark>
              {extra && <Divider $m="0 0 0 -1px" hidden />}
            </React.Fragment>
          ))}
        </Bookmarks>
      </Chrome>

      <Viewport>
        <Page>
          <Breadcrumb>
            <HomeGlyph>
              <FaHome size={20} />
            </HomeGlyph>
            <Fit w={54}>Home</Fit>
            <Slash>/</Slash>
            <Fit w={120}>Registrations</Fit>
            <Slash>/</Slash>
            <Current>
              <Fit w={151}>Add Registration</Fit>
            </Current>
          </Breadcrumb>
          <Card>
            <Heading>
              <Fit w={217}>Registration Details</Fit>
            </Heading>
            <Rule />
            <Select label="Student" w={75} h={47} mb={20} />
            <Select label="Courses" w={75} h={48} mb={19} />
            <Columns $mb={20}>
              <Input label="Total Fee (Br.)" lw={131} text="0" tw={12} disabled color="#6b6b6b" />
              <Input label="Discount (%)" lw={120} text="0" tw={12} color="#000" />
              <Input label="Fee after discount (Br.)" lw={211} text="0" tw={12} disabled color="#6b6b6b" />
            </Columns>
            <Columns $mb={19}>
              <Input label="1st payment date" lw={163} text="mm/dd/yyyy" tw={117} date color="#000" />
              <Input label="1st payment amount (Br.)" lw={237} text="1st payment amount (Br.)" tw={227} />
              <Input label="1st payment receipt" lw={185} text="1st payment receipt" tw={178} />
            </Columns>
            <Columns $mb={31}>
              <Input label="2nd payment date" lw={170} text="mm/dd/yyyy" tw={117} date color="#000" />
              <Input label="2nd payment amount (Br.)" lw={244} text="2nd payment amount (Br.)" tw={234} />
              <Input label="2nd payment receipt" lw={191} text="2nd payment receipt" tw={184} />
            </Columns>
            <SaveButton>
              <Fit w={56}>Save</Fit>
              <PlaneIcon width="20" height="20" viewBox="0 0 20 20">
                <path d="M19.500.5 0 9l5.500 3.200zM19.500.5 7 12.500l1 .5zM19.500.5 8.800 13.200l2.700 6.300z" fill="#fff" stroke="#fff" strokeWidth=".3" />
              </PlaneIcon>
            </SaveButton>
          </Card>
        </Page>
        <Scrollbar>
          <svg width="13" height="11" viewBox="0 0 13 11">
            <path d="M6.500 1.500 12 10H1z" fill="#9f9f9f" stroke="#9f9f9f" strokeLinejoin="round" />
          </svg>
          <Thumb />
          <svg width="13" height="11" viewBox="0 0 13 11">
            <path d="M6.500 9.500 1 1h11z" fill="#9f9f9f" stroke="#9f9f9f" strokeLinejoin="round" />
          </svg>
        </Scrollbar>
      </Viewport>

      <Taskbar>
        <Weather>
          <MoonIcon />
          <Readings>
            <div>
              <Fit w={30}>16°C</Fit>
            </div>
            <Dim>
              <Fit w={34}>Clear</Fit>
            </Dim>
          </Readings>
        </Weather>
        <TaskSlot $mr={6}>
          <StartIcon />
        </TaskSlot>
        <SearchPill>
          <LensIcon />
          <SearchText>
            <Fit w={52}>Search</Fit>
          </SearchText>
          <FrogIcon />
        </SearchPill>
        {TASKS.map(([Icon, state], i) => (
          <TaskSlot key={i} $active={state === "active"} $running={state === "running"}>
            <Icon />
          </TaskSlot>
        ))}
        <Tray>
          <TrayItem $w={16} $mr={22}>
            <svg width="16" height="10" viewBox="0 0 16 10">
              <path d="m1.500 8.500 6.500-6.500 6.500 6.500" fill="none" stroke="#fff" strokeWidth="2" />
            </svg>
          </TrayItem>
          <TrayItem $w={20} $mr={20}>
            <svg width="20" height="20" viewBox="0 0 20 20" fill="none" stroke="#fff" strokeWidth="1.400">
              <path d="M.8 9A9 9 0 0 1 18 5M18.500.5V5.500h-5.500M1.300 19v-4.500h5.500M1.500 14.500A9 9 0 0 0 10 19.200" />
              <circle cx="15" cy="15" r="5" fill="#ff9800" stroke="none" />
            </svg>
          </TrayItem>
          <TrayItem $w={20} $mr={20}>
            <svg width="20" height="14" viewBox="0 0 20 14">
              <path d="M4.500 6a5.500 5.500 0 0 1 10.500-1l-4 5z" fill="#8c8c8c" />
              <path d="M0 9.500A4.300 4.300 0 0 1 7 5l5 3-6 5.500H4Q0 13.500 0 9.500z" fill="#c7c7c7" />
              <path d="M2 12.500 12.500 6.500Q14 4.800 16.300 5.200A4.200 4.200 0 0 1 16 13.500H4.500Q2.800 13.500 2 12.500z" fill="#fff" />
            </svg>
          </TrayItem>
          <TrayItem $w={20} $mr={24}>
            <svg width="20" height="16" viewBox="0 0 20 16" fill="none" stroke="#fff">
              <rect x=".8" y="1.300" width="18.400" height="13.400" rx="1.800" strokeWidth="1.500" />
              <path d="M3.500 5h13M4.500 8h12" strokeWidth="1.700" strokeDasharray="1.700 1.600" />
              <path d="M5 11.500h10" strokeWidth="1.500" />
            </svg>
          </TrayItem>
          <TrayItem $w={28} $mr={23}>
            <Fit w={29}>ENG</Fit>
          </TrayItem>
          <TrayItem $w={20} $mr={10}>
            <svg width="20" height="16" viewBox="0 0 20 16" fill="none" stroke="#fff" strokeWidth="1.500">
              <path d="M.7 6.200a13.200 13.200 0 0 1 18.600 0M3.500 9a9.200 9.200 0 0 1 13 0M6.300 11.800a5.300 5.300 0 0 1 7.400 0" />
              <circle cx="10" cy="13.700" r="1.800" fill="#fff" stroke="none" />
            </svg>
          </TrayItem>
          <TrayItem $w={20} $mr={10}>
            <svg width="20" height="18" viewBox="0 0 20 18" fill="none" strokeWidth="1.500">
              <path d="M1 6.200h3L8.500 2v14L4 11.800H1z" stroke="#fff" />
              <path d="M11 6a4.500 4.500 0 0 1 0 6" stroke="#fff" />
              <path d="M13.500 3.700a8 8 0 0 1 0 10.600M16 1.500a11.500 11.500 0 0 1 0 15" stroke="#5a5a5a" />
            </svg>
          </TrayItem>
          <TrayItem $w={20} $mr={21}>
            <svg width="20" height="18" viewBox="0 0 20 18" fill="none">
              <path d="M9.500 4h5.300q2 0 2 2v7.500q0 2-2 2H4q-2 0-2-1.500" stroke="#fff" strokeWidth="1.500" />
              <path d="M17.800 7.500H19q1 0 1 1v2.500q0 1-1 1h-1.200z" fill="#fff" />
              <path d="M.3 12C-.5 6.500 3 3.500 6 .5c4 4 4 10-1.500 11.500L1 15z" fill="#fff" />
            </svg>
          </TrayItem>
          <Clock>
            <div>
              <Fit w={63}>10:56 PM</Fit>
            </div>
            <div>
              <Fit w={62}>4/1/2025</Fit>
            </div>
          </Clock>
        </Tray>
      </Taskbar>

      <Watermark>
        <MarkTitle>
          <Fit w={197}>Activate Windows</Fit>
        </MarkTitle>
        <MarkText>
          <Fit w={285}>Go to Settings to activate Windows.</Fit>
        </MarkText>
      </Watermark>
    </Screen>
  );
}
